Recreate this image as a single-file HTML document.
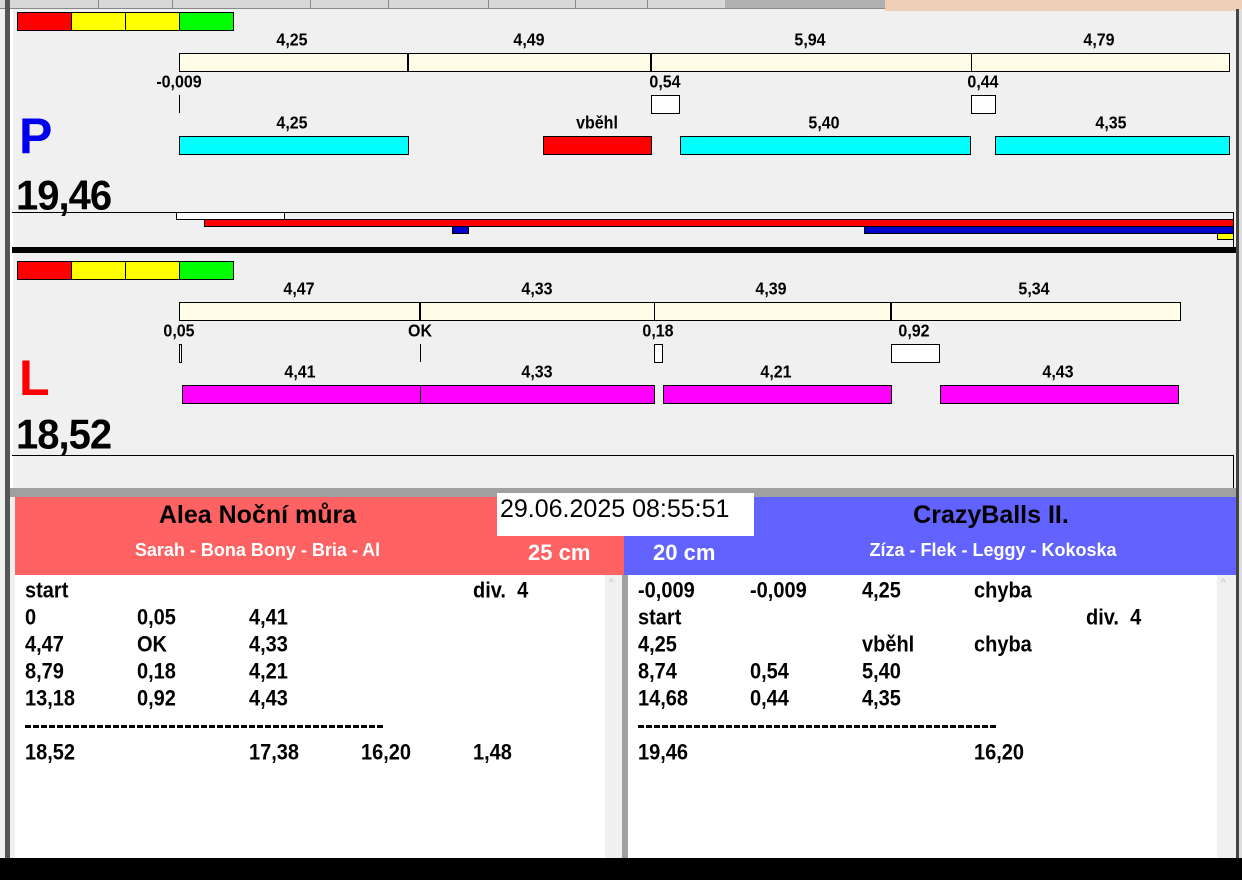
<!DOCTYPE html>
<html><head><meta charset="utf-8"><style>
*{margin:0;padding:0;box-sizing:border-box}
body{width:1242px;height:880px;background:#f0f0f0;position:relative;overflow:hidden;font-family:"Liberation Sans",Arial,sans-serif;font-weight:bold}
.a{position:absolute}
.b{position:absolute;border:1px solid #000}
.t{position:absolute;font-size:16px;transform:translateX(-50%) scaleY(1.08);white-space:nowrap;line-height:16px}
.r{position:absolute;font-size:20px;line-height:24px;white-space:nowrap;transform:scaleY(1.1);transform-origin:0 50%}
.big{position:absolute;font-size:40px;line-height:44px;letter-spacing:-1px;transform:scaleY(1.05)}
</style></head><body>
<div class="a" style="left:0;top:0;width:885px;height:9px;background:#d8d8d8;border-bottom:1px solid #888"></div>
<div class="a" style="left:885px;top:0;width:357px;height:11px;background:#efcfb5"></div>
<div class="a" style="left:98px;top:0;width:1px;height:8px;background:#888"></div>
<div class="a" style="left:172px;top:0;width:1px;height:8px;background:#888"></div>
<div class="a" style="left:310px;top:0;width:1px;height:8px;background:#888"></div>
<div class="a" style="left:388px;top:0;width:1px;height:8px;background:#888"></div>
<div class="a" style="left:488px;top:0;width:1px;height:8px;background:#888"></div>
<div class="a" style="left:575px;top:0;width:1px;height:8px;background:#888"></div>
<div class="a" style="left:647px;top:0;width:1px;height:8px;background:#888"></div>
<div class="a" style="left:725px;top:0;width:160px;height:8px;background:#b0b0b0"></div>
<div class="a" style="left:5px;top:0;width:5px;height:860px;background:#555"></div>
<div class="a" style="left:10px;top:9px;width:3px;height:480px;background:#fff"></div>
<div class="a" style="left:1236px;top:9px;width:3px;height:851px;background:#444"></div>
<div class="a" style="left:1239px;top:9px;width:3px;height:851px;background:#ddd"></div>

<div class="b" style="left:17px;top:12px;width:55px;height:19px;background:#f00"></div>
<div class="b" style="left:71px;top:12px;width:55px;height:19px;background:#ff0"></div>
<div class="b" style="left:125px;top:12px;width:55px;height:19px;background:#ff0"></div>
<div class="b" style="left:179px;top:12px;width:55px;height:19px;background:#0f0"></div>

<div class="b" style="left:179px;top:53px;width:1051px;height:19px;background:#fffde8"></div>
<div class="a" style="left:407px;top:53px;width:2px;height:19px;background:#000"></div>
<div class="a" style="left:650px;top:53px;width:2px;height:19px;background:#000"></div>
<div class="a" style="left:971px;top:53px;width:1px;height:19px;background:#000"></div>
<div class="t" style="left:292px;top:33px">4,25</div>
<div class="t" style="left:529px;top:33px">4,49</div>
<div class="t" style="left:810px;top:33px">5,94</div>
<div class="t" style="left:1099px;top:33px">4,79</div>
<div class="t" style="left:179px;top:75px">-0,009</div>
<div class="t" style="left:665px;top:75px">0,54</div>
<div class="t" style="left:983px;top:75px">0,44</div>
<div class="a" style="left:179px;top:95px;width:1px;height:18px;background:#000"></div>
<div class="b" style="left:651px;top:95px;width:29px;height:19px;background:#fff"></div>
<div class="b" style="left:971px;top:95px;width:25px;height:19px;background:#fff"></div>
<div class="t" style="left:292px;top:116px">4,25</div>
<div class="t" style="left:597px;top:116px">vběhl</div>
<div class="t" style="left:824px;top:116px">5,40</div>
<div class="t" style="left:1111px;top:116px">4,35</div>
<div class="b" style="left:179px;top:136px;width:230px;height:19px;background:#0ff"></div>
<div class="b" style="left:543px;top:136px;width:109px;height:19px;background:#f00"></div>
<div class="b" style="left:680px;top:136px;width:291px;height:19px;background:#0ff"></div>
<div class="b" style="left:995px;top:136px;width:235px;height:19px;background:#0ff"></div>
<div class="a" style="left:19px;top:106px;font-size:50px;line-height:60px;color:#0000ee">P</div>
<div class="big" style="left:16px;top:174px">19,46</div>
<div class="a" style="left:12px;top:212px;width:1222px;height:1px;background:#000"></div>
<div class="a" style="left:1233px;top:212px;width:1px;height:36px;background:#000"></div>
<div class="b" style="left:176px;top:212px;width:109px;height:8px;background:#fff"></div>
<div class="b" style="left:204px;top:219px;width:1030px;height:8px;background:#f00"></div>
<div class="a" style="left:452px;top:226px;width:17px;height:8px;background:#00c;border:1px solid #000"></div>
<div class="a" style="left:864px;top:226px;width:370px;height:8px;background:#00c;border:1px solid #000"></div>
<div class="a" style="left:1217px;top:233px;width:17px;height:7px;background:#ff0;border:1px solid #000"></div>
<div class="a" style="left:12px;top:247px;width:1224px;height:6px;background:#000"></div>

<div class="b" style="left:17px;top:261px;width:55px;height:19px;background:#f00"></div>
<div class="b" style="left:71px;top:261px;width:55px;height:19px;background:#ff0"></div>
<div class="b" style="left:125px;top:261px;width:55px;height:19px;background:#ff0"></div>
<div class="b" style="left:179px;top:261px;width:55px;height:19px;background:#0f0"></div>
<div class="b" style="left:179px;top:302px;width:1002px;height:19px;background:#fffde8"></div>
<div class="a" style="left:419px;top:302px;width:2px;height:19px;background:#000"></div>
<div class="a" style="left:654px;top:302px;width:1px;height:19px;background:#000"></div>
<div class="a" style="left:890px;top:302px;width:2px;height:19px;background:#000"></div>
<div class="t" style="left:299px;top:282px">4,47</div>
<div class="t" style="left:537px;top:282px">4,33</div>
<div class="t" style="left:771px;top:282px">4,39</div>
<div class="t" style="left:1034px;top:282px">5,34</div>
<div class="t" style="left:179px;top:324px">0,05</div>
<div class="t" style="left:420px;top:324px">OK</div>
<div class="t" style="left:658px;top:324px">0,18</div>
<div class="t" style="left:914px;top:324px">0,92</div>
<div class="b" style="left:179px;top:344px;width:3px;height:19px;background:#fff"></div>
<div class="a" style="left:420px;top:344px;width:1px;height:18px;background:#000"></div>
<div class="b" style="left:654px;top:344px;width:9px;height:19px;background:#fff"></div>
<div class="b" style="left:891px;top:344px;width:49px;height:19px;background:#fff"></div>
<div class="t" style="left:300px;top:365px">4,41</div>
<div class="t" style="left:537px;top:365px">4,33</div>
<div class="t" style="left:776px;top:365px">4,21</div>
<div class="t" style="left:1058px;top:365px">4,43</div>
<div class="b" style="left:182px;top:385px;width:473px;height:19px;background:#f0f"></div>
<div class="a" style="left:420px;top:385px;width:1px;height:19px;background:#000"></div>
<div class="b" style="left:663px;top:385px;width:229px;height:19px;background:#f0f"></div>
<div class="b" style="left:940px;top:385px;width:239px;height:19px;background:#f0f"></div>
<div class="a" style="left:19px;top:348px;font-size:50px;line-height:60px;color:#f00">L</div>
<div class="big" style="left:16px;top:413px">18,52</div>
<div class="a" style="left:12px;top:455px;width:1222px;height:1px;background:#000"></div>
<div class="a" style="left:1233px;top:455px;width:1px;height:33px;background:#000"></div>
<div class="a" style="left:10px;top:488px;width:1226px;height:9px;background:#a0a0a0"></div>

<div class="a" style="left:15px;top:497px;width:609px;height:78px;background:#ff6262"></div>
<div class="a" style="left:624px;top:497px;width:612px;height:78px;background:#6262ff"></div>
<div class="a" style="left:497px;top:493px;width:257px;height:43px;background:#fff"></div>
<div class="a" style="left:500px;top:494px;font-size:25px;font-weight:normal;line-height:30px">29.06.2025 08:55:51</div>
<div class="a" style="left:15px;top:500px;width:485px;text-align:center;font-size:25px;line-height:30px">Alea Noční můra</div>
<div class="a" style="left:15px;top:539px;width:485px;text-align:center;font-size:18px;line-height:22px;color:#fff">Sarah - Bona Bony - Bria - Al</div>
<div class="a" style="left:528px;top:540px;font-size:22px;line-height:26px;color:#fff">25 cm</div>
<div class="a" style="left:653px;top:540px;font-size:22px;line-height:26px;color:#fff">20 cm</div>
<div class="a" style="left:754px;top:500px;width:474px;text-align:center;font-size:25px;line-height:30px">CrazyBalls II.</div>
<div class="a" style="left:754px;top:539px;width:478px;text-align:center;font-size:18px;line-height:22px;color:#fff">Zíza - Flek - Leggy - Kokoska</div>

<div class="a" style="left:15px;top:575px;width:590px;height:283px;background:#fff"></div>
<div class="a" style="left:605px;top:575px;width:17px;height:283px;background:#f0f0f0"></div>
<div class="a" style="left:622px;top:575px;width:6px;height:283px;background:#a0a0a0"></div>
<div class="a" style="left:628px;top:575px;width:589px;height:283px;background:#fff"></div>
<div class="a" style="left:1217px;top:575px;width:17px;height:283px;background:#f0f0f0"></div>
<div class="a" style="left:609px;top:578px;font-size:10px;color:#bbb;font-weight:normal">^</div>
<div class="a" style="left:1221px;top:578px;font-size:10px;color:#bbb;font-weight:normal">^</div>

<div class="r" style="left:25px;top:579px">start</div><div class="r" style="left:473px;top:579px">div.&nbsp; 4</div>
<div class="r" style="left:25px;top:606px">0</div><div class="r" style="left:137px;top:606px">0,05</div><div class="r" style="left:249px;top:606px">4,41</div>
<div class="r" style="left:25px;top:633px">4,47</div><div class="r" style="left:137px;top:633px">OK</div><div class="r" style="left:249px;top:633px">4,33</div>
<div class="r" style="left:25px;top:660px">8,79</div><div class="r" style="left:137px;top:660px">0,18</div><div class="r" style="left:249px;top:660px">4,21</div>
<div class="r" style="left:25px;top:687px">13,18</div><div class="r" style="left:137px;top:687px">0,92</div><div class="r" style="left:249px;top:687px">4,43</div>
<div class="a" style="left:25px;top:725px;width:360px;height:3px;background:repeating-linear-gradient(90deg,#000 0 6px,transparent 6px 8px)"></div>
<div class="r" style="left:25px;top:741px">18,52</div><div class="r" style="left:249px;top:741px">17,38</div><div class="r" style="left:361px;top:741px">16,20</div><div class="r" style="left:473px;top:741px">1,48</div>

<div class="r" style="left:638px;top:579px">-0,009</div><div class="r" style="left:750px;top:579px">-0,009</div><div class="r" style="left:862px;top:579px">4,25</div><div class="r" style="left:974px;top:579px">chyba</div>
<div class="r" style="left:638px;top:606px">start</div><div class="r" style="left:1086px;top:606px">div.&nbsp; 4</div>
<div class="r" style="left:638px;top:633px">4,25</div><div class="r" style="left:862px;top:633px">vběhl</div><div class="r" style="left:974px;top:633px">chyba</div>
<div class="r" style="left:638px;top:660px">8,74</div><div class="r" style="left:750px;top:660px">0,54</div><div class="r" style="left:862px;top:660px">5,40</div>
<div class="r" style="left:638px;top:687px">14,68</div><div class="r" style="left:750px;top:687px">0,44</div><div class="r" style="left:862px;top:687px">4,35</div>
<div class="a" style="left:638px;top:725px;width:360px;height:3px;background:repeating-linear-gradient(90deg,#000 0 6px,transparent 6px 8px)"></div>
<div class="r" style="left:638px;top:741px">19,46</div><div class="r" style="left:974px;top:741px">16,20</div>

<div class="a" style="left:0;top:858px;width:1242px;height:22px;background:#000"></div>
</body></html>
